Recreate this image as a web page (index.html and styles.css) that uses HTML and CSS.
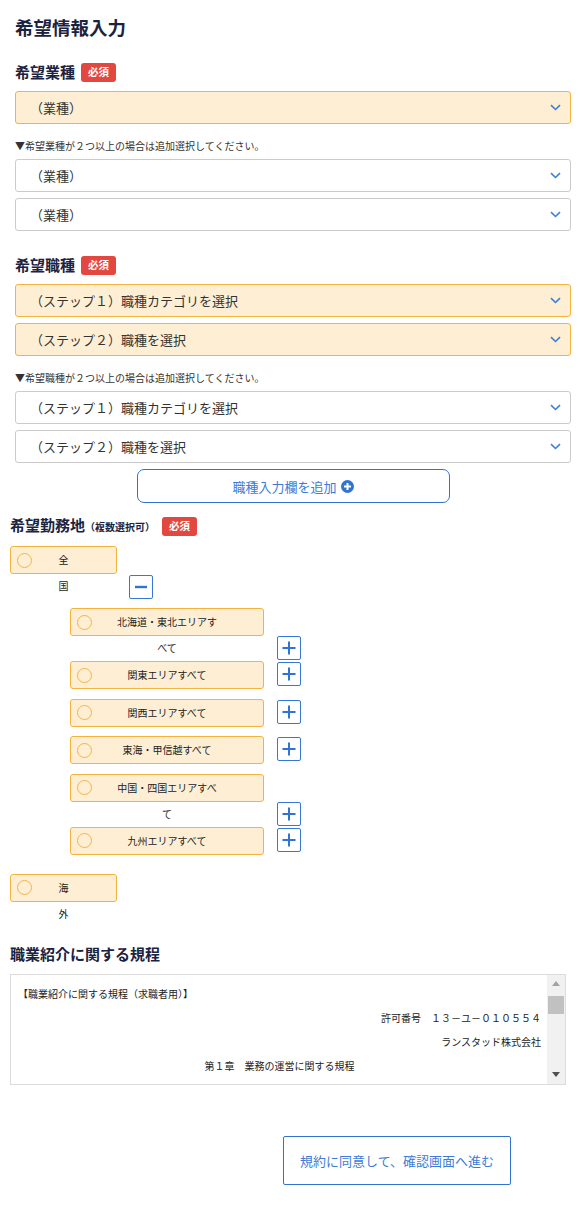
FILE: index.html
```html
<!DOCTYPE html>
<html lang="ja">
<head>
<meta charset="utf-8">
<title>希望情報入力</title>
<link rel="stylesheet" href="styles.css">
</head>
<body>
<main class="page">
  <section class="form-main">
    <h1 class="title">希望情報入力</h1>

    <div class="label-row">
      <span class="label">希望業種</span><span class="badge">必須</span>
    </div>
    <div class="select select--req"><span class="select-text">（業種）</span><svg class="chev" width="11" height="7" viewBox="0 0 11 7"><path d="M1 1.2l4.5 4.3L10 1.2" fill="none" stroke="#3b80d9" stroke-width="1.6"/></svg></div>
    <p class="note">▼希望業種が２つ以上の場合は追加選択してください。</p>
    <div class="select"><span class="select-text">（業種）</span><svg class="chev" width="11" height="7" viewBox="0 0 11 7"><path d="M1 1.2l4.5 4.3L10 1.2" fill="none" stroke="#3b80d9" stroke-width="1.6"/></svg></div>
    <div class="select"><span class="select-text">（業種）</span><svg class="chev" width="11" height="7" viewBox="0 0 11 7"><path d="M1 1.2l4.5 4.3L10 1.2" fill="none" stroke="#3b80d9" stroke-width="1.6"/></svg></div>

    <div class="label-row label-row--next">
      <span class="label">希望職種</span><span class="badge">必須</span>
    </div>
    <div class="select select--req"><span class="select-text">（ステップ１）職種カテゴリを選択</span><svg class="chev" width="11" height="7" viewBox="0 0 11 7"><path d="M1 1.2l4.5 4.3L10 1.2" fill="none" stroke="#3b80d9" stroke-width="1.6"/></svg></div>
    <div class="select select--req"><span class="select-text">（ステップ２）職種を選択</span><svg class="chev" width="11" height="7" viewBox="0 0 11 7"><path d="M1 1.2l4.5 4.3L10 1.2" fill="none" stroke="#3b80d9" stroke-width="1.6"/></svg></div>
    <p class="note">▼希望職種が２つ以上の場合は追加選択してください。</p>
    <div class="select"><span class="select-text">（ステップ１）職種カテゴリを選択</span><svg class="chev" width="11" height="7" viewBox="0 0 11 7"><path d="M1 1.2l4.5 4.3L10 1.2" fill="none" stroke="#3b80d9" stroke-width="1.6"/></svg></div>
    <div class="select"><span class="select-text">（ステップ２）職種を選択</span><svg class="chev" width="11" height="7" viewBox="0 0 11 7"><path d="M1 1.2l4.5 4.3L10 1.2" fill="none" stroke="#3b80d9" stroke-width="1.6"/></svg></div>

    <button class="add-btn" type="button">職種入力欄を追加<svg width="13" height="13" viewBox="0 0 13 13"><circle cx="6.5" cy="6.5" r="6.5" fill="#2f74d0"/><path d="M6.5 3v7M3 6.5h7" stroke="#fff" stroke-width="2"/></svg></button>
  </section>

  <section class="form-area">
    <div class="label-row label-row--area">
      <span class="label">希望勤務地<small>（複数選択可）</small></span><span class="badge badge--area">必須</span>
    </div>

    <div class="tree">
      <div class="row row--top">
        <label class="area area--top"><span class="radio"></span><span class="area-text">全国</span></label>
        <button class="toggle toggle--top" type="button"><svg width="14" height="14" viewBox="0 0 14 14"><path d="M1 7h12" stroke="#2f74d0" stroke-width="2.4"/></svg></button>
      </div>

      <div class="children">
        <div class="row row--wrap">
          <label class="area"><span class="radio"></span><span class="area-text">北海道・東北エリアすべて</span></label>
          <button class="toggle toggle--wrap" type="button"><svg width="14" height="14" viewBox="0 0 14 14"><path d="M7 0.5v13M0.5 7h13" stroke="#2f74d0" stroke-width="2"/></svg></button>
        </div>
        <div class="row">
          <label class="area"><span class="radio"></span><span class="area-text">関東エリアすべて</span></label>
          <button class="toggle" type="button"><svg width="14" height="14" viewBox="0 0 14 14"><path d="M7 0.5v13M0.5 7h13" stroke="#2f74d0" stroke-width="2"/></svg></button>
        </div>
        <div class="row">
          <label class="area"><span class="radio"></span><span class="area-text">関西エリアすべて</span></label>
          <button class="toggle" type="button"><svg width="14" height="14" viewBox="0 0 14 14"><path d="M7 0.5v13M0.5 7h13" stroke="#2f74d0" stroke-width="2"/></svg></button>
        </div>
        <div class="row">
          <label class="area"><span class="radio"></span><span class="area-text">東海・甲信越すべて</span></label>
          <button class="toggle" type="button"><svg width="14" height="14" viewBox="0 0 14 14"><path d="M7 0.5v13M0.5 7h13" stroke="#2f74d0" stroke-width="2"/></svg></button>
        </div>
        <div class="row row--wrap">
          <label class="area"><span class="radio"></span><span class="area-text">中国・四国エリアすべて</span></label>
          <button class="toggle toggle--wrap" type="button"><svg width="14" height="14" viewBox="0 0 14 14"><path d="M7 0.5v13M0.5 7h13" stroke="#2f74d0" stroke-width="2"/></svg></button>
        </div>
        <div class="row row--end">
          <label class="area"><span class="radio"></span><span class="area-text">九州エリアすべて</span></label>
          <button class="toggle" type="button"><svg width="14" height="14" viewBox="0 0 14 14"><path d="M7 0.5v13M0.5 7h13" stroke="#2f74d0" stroke-width="2"/></svg></button>
        </div>
      </div>

      <div class="row row--last">
        <label class="area area--top"><span class="radio"></span><span class="area-text">海外</span></label>
      </div>
    </div>

    <h2 class="terms-title">職業紹介に関する規程</h2>
    <div class="terms">
      <div class="terms-body">
        <p>【職業紹介に関する規程（求職者用）】</p>
        <p class="t-right">許可番号　１３－ユ－０１０５５４</p>
        <p class="t-right">ランスタッド株式会社</p>
        <p class="t-center">第１章　業務の運営に関する規程</p>
      </div>
      <div class="scrollbar">
        <div class="sb-btn"><span class="arrow-up"></span></div>
        <div class="sb-track"><div class="sb-thumb"></div></div>
        <div class="sb-btn"><span class="arrow-down"></span></div>
      </div>
    </div>

    <div class="submit-wrap">
      <button class="submit" type="button">規約に同意して、確認画面へ進む</button>
    </div>
  </section>
</main>
</body>
</html>
```

FILE: styles.css
```css
* {
  box-sizing: border-box;
  margin: 0;
  padding: 0;
}

html, body {
  background: #ffffff;
}

body {
  width: 586px;
  font-family: "Noto Sans CJK JP", "Noto Sans", sans-serif;
  color: #222222;
}

.page {
  padding-bottom: 32px;
}

.form-main {
  padding: 0 15px;
}

.title {
  margin-top: 14px;
  font-size: 18.5px;
  line-height: 26px;
  font-weight: 700;
  color: #1b2340;
}

.label-row {
  display: flex;
  align-items: center;
  height: 22px;
  margin-top: 21px;
}

.label-row--next {
  margin-top: 23px;
}

.label {
  font-size: 15px;
  line-height: 22px;
  font-weight: 700;
  color: #1b2340;
}

.label small {
  font-size: 10px;
  font-weight: 700;
}

.badge {
  display: flex;
  align-items: center;
  justify-content: center;
  width: 35px;
  height: 19px;
  margin-left: 6px;
  border-radius: 3px;
  background: #e2483f;
  color: #ffffff;
  font-size: 10.5px;
  font-weight: 700;
  line-height: 1;
}

.badge--area {
  margin-left: 7px;
}

.select {
  display: flex;
  align-items: center;
  height: 33px;
  margin-top: 6px;
  padding: 0 9px 0 14px;
  border: 1px solid #cbcbcb;
  border-radius: 3px;
  background: #ffffff;
  font-size: 13px;
  color: #333333;
}

.label-row + .select {
  margin-top: 8px;
}

.select--req {
  background: #fdeed4;
  border-color: #f5b23c;
}

.select-text {
  flex: 1;
  line-height: 20px;
}

.chev {
  flex: none;
}

.note {
  margin-top: 15px;
  font-size: 10px;
  line-height: 14px;
  color: #333333;
}

.add-btn {
  display: flex;
  align-items: center;
  justify-content: center;
  gap: 4px;
  width: 313px;
  height: 34px;
  margin: 6px auto 0;
  border: 1px solid #2f74d0;
  border-radius: 7px;
  background: #ffffff;
  color: #3d7bd6;
  font-family: inherit;
  font-size: 13px;
}

.form-area {
  padding: 0 10px;
}

.label-row--area {
  margin-top: 12px;
}

.tree {
  margin-top: 9px;
}

.row {
  display: flex;
  align-items: flex-start;
  margin-bottom: 9.5px;
}

.row--top {
  margin-bottom: 9px;
}

.row--wrap {
  margin-bottom: 1px;
}

.row--end,
.row--last {
  margin-bottom: 0;
}

.area {
  display: grid;
  grid-template-columns: 44px 1fr 44px;
  grid-template-rows: 26px;
  width: 194px;
  height: 28px;
  border: 1px solid #f5b23c;
  border-radius: 3px;
  background: #fdeed4;
  font-size: 10px;
  line-height: 26px;
  color: #222222;
}

.area--top {
  width: 107px;
}

.radio {
  align-self: center;
  width: 15px;
  height: 15px;
  margin-left: 6px;
  border: 1.5px solid #f5b449;
  border-radius: 50%;
}

.area-text {
  text-align: center;
}

.toggle {
  display: flex;
  align-items: center;
  justify-content: center;
  flex: none;
  width: 24px;
  height: 24px;
  margin-left: 13px;
  margin-top: 1px;
  border: 1px solid #3579d4;
  border-radius: 2px;
  background: #ffffff;
}

.toggle--top {
  margin-left: 12px;
  margin-top: 29px;
}

.toggle--wrap {
  margin-top: 28px;
}

.children {
  margin-left: 60px;
  padding-bottom: 19px;
}

.terms-title {
  margin-top: 41px;
  font-size: 15px;
  line-height: 22px;
  font-weight: 700;
  color: #1b2340;
}

.terms {
  display: flex;
  width: 556px;
  height: 111px;
  margin-top: 9px;
  border: 1px solid #dcdcdc;
}

.terms-body {
  flex: 1;
  overflow: hidden;
  padding: 7px 6px 0 7px;
  font-size: 10px;
  line-height: 24px;
  color: #222222;
}

.t-right {
  text-align: right;
}

.t-center {
  text-align: center;
}

.scrollbar {
  display: flex;
  flex-direction: column;
  width: 18px;
  background: #f1f1f1;
}

.sb-btn {
  display: flex;
  align-items: center;
  justify-content: center;
  height: 18px;
}

.arrow-up {
  width: 0;
  height: 0;
  border-left: 4.5px solid transparent;
  border-right: 4.5px solid transparent;
  border-bottom: 5px solid #a3a3a3;
}

.arrow-down {
  width: 0;
  height: 0;
  border-left: 4.5px solid transparent;
  border-right: 4.5px solid transparent;
  border-top: 5px solid #505050;
}

.sb-track {
  flex: 1;
  padding: 3px 1px 0;
}

.sb-thumb {
  height: 18px;
  background: #c1c1c1;
}

.submit-wrap {
  display: flex;
  margin-top: 51px;
  padding-left: 273px;
}

.submit {
  display: flex;
  align-items: center;
  justify-content: center;
  width: 228px;
  height: 49px;
  border: 1px solid #2f74d0;
  border-radius: 2px;
  background: #ffffff;
  color: #3d7bd6;
  font-family: inherit;
  font-size: 13px;
}
```
